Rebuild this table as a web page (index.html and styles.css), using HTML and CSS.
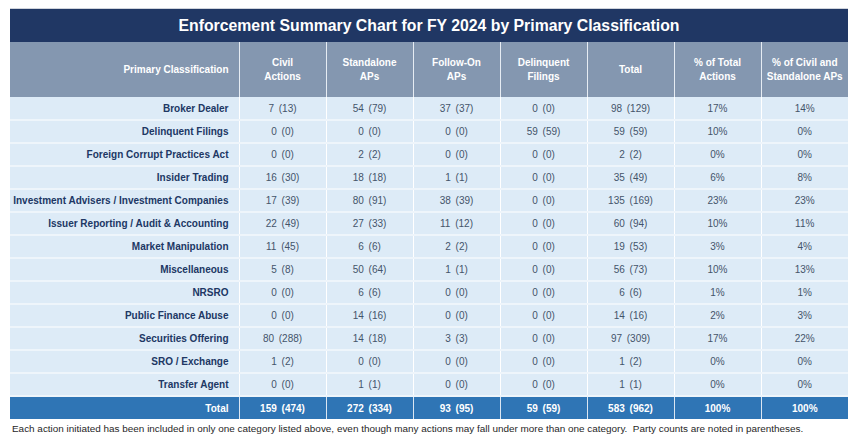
FILE: index.html
```html
<!DOCTYPE html>
<html>
<head>
<meta charset="utf-8">
<link rel="stylesheet" href="styles.css">
</head>
<body>
<div class="wrap">
<table class="summary">
<colgroup>
<col class="c-label"><col class="c-num"><col class="c-num"><col class="c-num"><col class="c-num"><col class="c-num"><col class="c-num"><col class="c-num">
</colgroup>
<thead>
<tr class="title-row"><th colspan="8">Enforcement Summary Chart for FY 2024 by Primary Classification</th></tr>
<tr class="head-row">
<th class="label">Primary Classification</th>
<th>Civil<br>Actions</th>
<th>Standalone<br>APs</th>
<th>Follow-On<br>APs</th>
<th>Delinquent<br>Filings</th>
<th>Total</th>
<th>% of Total<br>Actions</th>
<th>% of Civil and<br>Standalone APs</th>
</tr>
</thead>
<tbody>
<tr><th class="label">Broker Dealer</th><td>7 (13)</td><td>54 (79)</td><td>37 (37)</td><td>0 (0)</td><td>98 (129)</td><td>17%</td><td>14%</td></tr>
<tr><th class="label">Delinquent Filings</th><td>0 (0)</td><td>0 (0)</td><td>0 (0)</td><td>59 (59)</td><td>59 (59)</td><td>10%</td><td>0%</td></tr>
<tr><th class="label">Foreign Corrupt Practices Act</th><td>0 (0)</td><td>2 (2)</td><td>0 (0)</td><td>0 (0)</td><td>2 (2)</td><td>0%</td><td>0%</td></tr>
<tr><th class="label">Insider Trading</th><td>16 (30)</td><td>18 (18)</td><td>1 (1)</td><td>0 (0)</td><td>35 (49)</td><td>6%</td><td>8%</td></tr>
<tr><th class="label">Investment Advisers / Investment Companies</th><td>17 (39)</td><td>80 (91)</td><td>38 (39)</td><td>0 (0)</td><td>135 (169)</td><td>23%</td><td>23%</td></tr>
<tr><th class="label">Issuer Reporting / Audit &amp; Accounting</th><td>22 (49)</td><td>27 (33)</td><td>11 (12)</td><td>0 (0)</td><td>60 (94)</td><td>10%</td><td>11%</td></tr>
<tr><th class="label">Market Manipulation</th><td>11 (45)</td><td>6 (6)</td><td>2 (2)</td><td>0 (0)</td><td>19 (53)</td><td>3%</td><td>4%</td></tr>
<tr><th class="label">Miscellaneous</th><td>5 (8)</td><td>50 (64)</td><td>1 (1)</td><td>0 (0)</td><td>56 (73)</td><td>10%</td><td>13%</td></tr>
<tr><th class="label">NRSRO</th><td>0 (0)</td><td>6 (6)</td><td>0 (0)</td><td>0 (0)</td><td>6 (6)</td><td>1%</td><td>1%</td></tr>
<tr><th class="label">Public Finance Abuse</th><td>0 (0)</td><td>14 (16)</td><td>0 (0)</td><td>0 (0)</td><td>14 (16)</td><td>2%</td><td>3%</td></tr>
<tr><th class="label">Securities Offering</th><td>80 (288)</td><td>14 (18)</td><td>3 (3)</td><td>0 (0)</td><td>97 (309)</td><td>17%</td><td>22%</td></tr>
<tr><th class="label">SRO / Exchange</th><td>1 (2)</td><td>0 (0)</td><td>0 (0)</td><td>0 (0)</td><td>1 (2)</td><td>0%</td><td>0%</td></tr>
<tr><th class="label">Transfer Agent</th><td>0 (0)</td><td>1 (1)</td><td>0 (0)</td><td>0 (0)</td><td>1 (1)</td><td>0%</td><td>0%</td></tr>
</tbody>
<tfoot>
<tr class="total-row"><th class="label">Total</th><td>159 (474)</td><td>272 (334)</td><td>93 (95)</td><td>59 (59)</td><td>583 (962)</td><td>100%</td><td>100%</td></tr>
</tfoot>
</table>
<p class="note">Each action initiated has been included in only one category listed above, even though many actions may fall under more than one category.&nbsp; Party counts are noted in parentheses.</p>
</div>
</body>
</html>
```
FILE: styles.css
```css
html, body {
  margin: 0;
  padding: 0;
  background: #ffffff;
}
body {
  font-family: "Liberation Sans", Arial, sans-serif;
}
.wrap {
  padding: 8px 0 0 10px;
}
.summary {
  border-collapse: collapse;
  table-layout: fixed;
  width: 837px;
}
.c-label { width: 229px; }
.c-num { width: 87px; }
.summary th, .summary td {
  padding: 0;
  text-align: center;
  font-size: 10px;
  word-spacing: 2px;
  white-space: nowrap;
}
.title-row th {
  background: #203764;
  color: #ffffff;
  font-size: 15.8px;
  font-weight: bold;
  height: 33px;
  word-spacing: 0;
  border: none;
  border-top: 1px solid #d0d4dc;
}
.head-row th {
  background: #8497b0;
  color: #ffffff;
  font-weight: bold;
  height: 55px;
  line-height: 14px;
  border-left: 1px solid #e6ecf3;
  word-spacing: 0;
}
.head-row th:first-child { border-left: none; }
tbody tr {
  height: 23px;
}
tbody th, tbody td {
  background: #ddebf7;
  border-top: 2px solid #eef5fb;
  border-left: 1px solid #ffffff;
}
tbody tr:first-child th, tbody tr:first-child td { border-top: none; }
tbody td {
  color: #44546a;
  font-weight: normal;
}
.summary .label {
  text-align: right;
  padding-right: 10px;
  border-left: none;
  word-spacing: 0;
}
tbody th.label {
  color: #203764;
  font-weight: bold;
}
.total-row {
  height: 23px;
}
.total-row th, .total-row td {
  background: #2f75b5;
  color: #ffffff;
  font-weight: bold;
  border-left: 1px solid #dbe6f2;
  border-top: 2px solid #eef5fb;
}
.total-row th.label { border-left: none; }
.note {
  margin: 4px 0 0 2px;
  font-size: 9.94px;
  color: #1f1f1f;
}
```
